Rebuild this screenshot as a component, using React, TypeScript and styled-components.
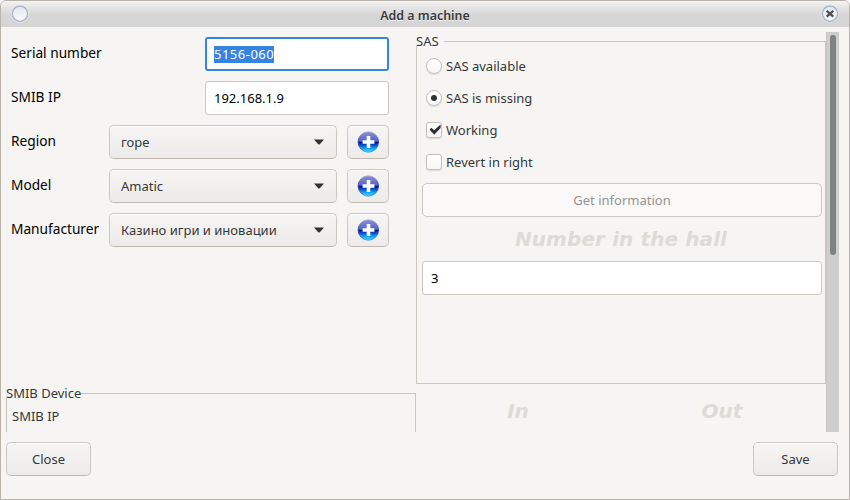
import React from "react";
import styled, { createGlobalStyle, css } from "styled-components";

const GlobalStyle = createGlobalStyle`
  * { box-sizing: border-box; }
  body {
    margin: 0;
    background: #fff;
    font-family: "Noto Sans", "Open Sans", sans-serif;
    font-size: 13px;
    line-height: 18px;
    color: #33393b;
  }
`;

const Window = styled.div`
  width: 850px;
  height: 500px;
  display: flex;
  flex-direction: column;
  border: 1px solid #b9b2ab;
  border-radius: 6px 6px 0 0;
  background: #f6f5f3;
  overflow: hidden;
`;

const TitleBar = styled.header`
  flex: none;
  height: 26px;
  display: grid;
  grid-template-columns: 20px 1fr 20px;
  align-items: center;
  padding: 0 9px 0 9px;
  background: linear-gradient(#f4f4f4 0, #e6e6e6 6px, #d6d6d6 14px, #d5d5d5 100%);
`;

const Title = styled.h1`
  margin: 0;
  padding-top: 4px;
  text-align: center;
  font-size: 12.4px;
  font-weight: 600;
  line-height: 18px;
  color: #3a3a3a;
  text-shadow: 0 1px 0 #f4f4f4;
`;

const Content = styled.main`
  display: flex;
  height: 400px;
  margin: 5px 10px 0 5px;
  overflow: hidden;
`;

const Column = styled.section`
  width: 410px;
  flex: none;
  display: flex;
  flex-direction: column;
`;

const Form = styled.div`
  height: 361px;
  flex: none;
  padding: 5px 27px 0 5px;
  display: flex;
  flex-direction: column;
  gap: 10px;
`;

const FormRow = styled.div`
  display: flex;
  height: 34px;
`;

const Label = styled.label`
  flex: 1;
  padding-top: 7px;
  font-size: 13.7px;
  white-space: nowrap;
  color: #000;
`;

const Entry = styled.div<{ $focused?: boolean; $width?: string }>`
  width: ${(p) => p.$width ?? "184px"};
  height: 34px;
  display: flex;
  align-items: center;
  padding: 0 8px;
  border: 1px solid #cdc7c2;
  border-radius: 3px;
  background: #fff;
  color: #000;
  ${(p) =>
    p.$focused &&
    css`
      border: 2px solid #3584e4;
      padding: 0 7px;
    `}
`;

const Selection = styled.span`
  height: 17px;
  line-height: 17px;
  letter-spacing: 0.5px;
  background: #3584e4;
  color: #fff;
`;

const buttonFace = css`
  height: 34px;
  border: 1px solid #cdc7c2;
  border-bottom-color: #bfb8b1;
  border-radius: 5px;
  background: linear-gradient(#f6f5f4, #edebe9);
  box-shadow: inset 0 1px 0 #fff;
  font: inherit;
  color: #33393b;
`;

const Combo = styled.div`
  ${buttonFace}
  width: 228px;
  display: flex;
  align-items: center;
  justify-content: space-between;
  padding: 0 12px 0 11px;
`;

const AddButton = styled.button`
  ${buttonFace}
  width: 42px;
  margin-left: 10px;
  padding: 0;
  display: flex;
  align-items: center;
  justify-content: center;
`;

const Button = styled.button<{ $wide?: boolean }>`
  ${buttonFace}
  width: ${(p) => (p.$wide ? "400px" : "85px")};
  flex: none;
  padding: 0 0 1px;
  &:disabled {
    background: #faf9f8;
    border-color: #cdc7c2;
    box-shadow: none;
    color: #929595;
  }
`;

const Group = styled.div<{ $height: number; $offset: number }>`
  height: ${(p) => p.$height}px;
  flex: none;
  margin-top: ${(p) => p.$offset}px;
  border: 1px solid #c9c5bf;
  padding: 0 3px 0 5px;
`;

const Legend = styled.div<{ $gap: number }>`
  width: max-content;
  height: 18px;
  margin: -10px 0 0 -6px;
  padding-right: ${(p) => p.$gap}px;
  background: linear-gradient(#f6f5f3, #f6f5f3) 0 0 / 100% 14px no-repeat;
`;

const Choices = styled.div`
  display: grid;
  grid-auto-rows: 32px;
  padding-left: 4px;
  margin-bottom: 5px;
`;

const Choice = styled.label`
  display: flex;
  align-items: center;
  gap: 4px;
`;

const Indicator = styled.span<{ $round?: boolean }>`
  width: 16px;
  height: 16px;
  border: 1px solid #c6bfb8;
  border-radius: ${(p) => (p.$round ? "50%" : "3px")};
  background: linear-gradient(#fff, #f8f7f6);
  box-shadow: 0 1px 1px rgba(0, 0, 0, 0.12);
  display: flex;
  align-items: center;
  justify-content: center;
`;

const Dot = styled.span`
  width: 6px;
  height: 6px;
  border-radius: 50%;
  background: #2e3436;
`;

const Heading = styled.h2`
  margin: 0;
  font: italic bold 20px/24px "DejaVu Sans", sans-serif;
  color: #dddbd7;
  text-align: center;
`;

const HallHeading = styled(Heading)`
  margin: 10px 2px 10px 0;
  letter-spacing: 0.1px;
`;

const Totals = styled.div`
  display: grid;
  grid-template-columns: 1fr 1fr;
  padding: 15px 2px 0 0;
`;

const Nested = styled.div`
  padding-top: 5px;
`;

const ScrollTrack = styled.div`
  width: 13px;
  flex: none;
  padding: 3px 3px 0 3px;
  border-left: 1px solid #cbc6c1;
  background: #cecece;
`;

const ScrollThumb = styled.div`
  width: 6px;
  height: 220px;
  border-radius: 3px;
  background: #7e8281;
`;

const Footer = styled.footer`
  display: flex;
  justify-content: space-between;
  padding: 10px 11px 0 5px;
`;

const Arrow = () => (
  <svg width="10" height="6" viewBox="0 0 10 6">
    <path d="M0 .5h10L5.8 5.2Q5 5.9 4.2 5.2Z" fill="#2e3436" />
  </svg>
);

const Check = () => (
  <svg width="14" height="14" viewBox="0 0 14 14">
    <path d="M2.5 6.4 4.6 4.8 7 7.3 13.6 1.6V4.9L7.2 11.8Z" fill="#2e3436" />
  </svg>
);

const Plus = () => (
  <svg width="22" height="22" viewBox="0 0 22 22">
    <defs>
      <linearGradient id="ball" x1="0" y1="0" x2="0" y2="1">
        <stop offset="0" stopColor="#8e90d0" />
        <stop offset=".25" stopColor="#7377c8" />
        <stop offset=".46" stopColor="#4a68c8" />
        <stop offset=".52" stopColor="#0012a0" />
        <stop offset=".66" stopColor="#0754cf" />
        <stop offset=".85" stopColor="#17b4fa" />
        <stop offset="1" stopColor="#48d4ff" />
      </linearGradient>
      <linearGradient id="rim" x1="0" y1="0" x2="0" y2="1">
        <stop offset="0" stopColor="#aeb0de" />
        <stop offset=".5" stopColor="#2738b0" />
        <stop offset="1" stopColor="#579ed0" />
      </linearGradient>
    </defs>
    <circle cx="11.3" cy="11" r="10.2" fill="url(#ball)" stroke="url(#rim)" />
    <path d="M9.7 5h3.6v4.2h4.1v3.6h-4.1V17H9.7v-4.2H5.6V9.2h4.1Z" fill="#fff" />
  </svg>
);

const TitleButton = ({ close }: { close?: boolean }) => (
  <svg width="20" height="20" viewBox="0 0 20 20">
    <defs>
      <linearGradient id="knob" x1="0" y1="0" x2="0" y2="1">
        <stop offset="0" stopColor="#e1e5ec" />
        <stop offset="1" stopColor="#fafbfc" />
      </linearGradient>
    </defs>
    <circle cx="10" cy="9.8" r="8.6" fill="none" stroke="#e0e5ec" />
    <circle cx="10" cy="9.7" r="7.6" fill="url(#knob)" stroke="#a6b3ca" strokeWidth="1.3" />
    {close && <path d="m6.7 6.9 6.6 5.8M13.3 6.9l-6.6 5.8" stroke="#505050" strokeWidth="2.3" />}
  </svg>
);

const combos = [
  { label: "Region", value: "горе" },
  { label: "Model", value: "Amatic" },
  { label: "Manufacturer", value: "Казино игри и иновации" },
];

export default function App() {
  return (
    <>
      <GlobalStyle />
      <Window>
        <TitleBar>
          <TitleButton />
          <Title>Add a machine</Title>
          <TitleButton close />
        </TitleBar>
        <Content>
          <Column>
            <Form>
              <FormRow>
                <Label>Serial number</Label>
                <Entry $focused>
                  <Selection>5156-060</Selection>
                </Entry>
              </FormRow>
              <FormRow>
                <Label>SMIB IP</Label>
                <Entry>192.168.1.9</Entry>
              </FormRow>
              {combos.map((c) => (
                <FormRow key={c.label}>
                  <Label>{c.label}</Label>
                  <Combo>
                    {c.value}
                    <Arrow />
                  </Combo>
                  <AddButton aria-label={`Add ${c.label}`}>
                    <Plus />
                  </AddButton>
                </FormRow>
              ))}
            </Form>
            <Group $height={200} $offset={0}>
              <Legend $gap={0}>SMIB Device</Legend>
              <Nested>SMIB IP</Nested>
            </Group>
          </Column>
          <Column>
            <Group $height={343} $offset={9}>
              <Legend $gap={5}>SAS</Legend>
              <Choices>
                <Choice>
                  <Indicator $round />
                  SAS available
                </Choice>
                <Choice>
                  <Indicator $round>
                    <Dot />
                  </Indicator>
                  SAS is missing
                </Choice>
                <Choice>
                  <Indicator>
                    <Check />
                  </Indicator>
                  Working
                </Choice>
                <Choice>
                  <Indicator />
                  Revert in right
                </Choice>
              </Choices>
              <Button $wide disabled>
                Get information
              </Button>
              <HallHeading>Number in the hall</HallHeading>
              <Entry $width="400px">3</Entry>
            </Group>
            <Totals>
              <Heading>In</Heading>
              <Heading>Out</Heading>
            </Totals>
          </Column>
          <ScrollTrack>
            <ScrollThumb />
          </ScrollTrack>
        </Content>
        <Footer>
          <Button>Close</Button>
          <Button>Save</Button>
        </Footer>
      </Window>
    </>
  );
}
